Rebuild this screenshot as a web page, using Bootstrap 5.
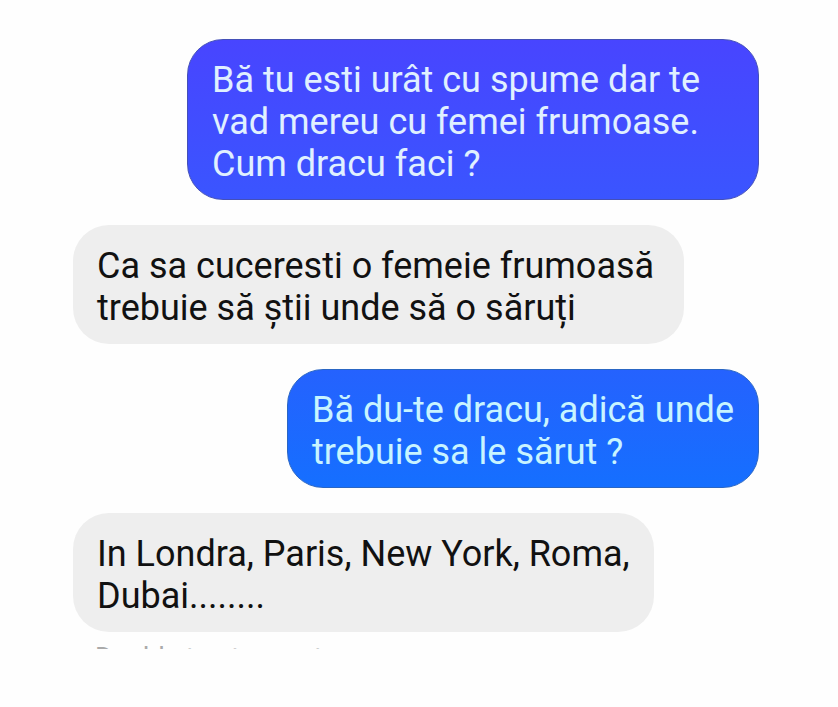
<!DOCTYPE html>
<html lang="ro">
<head>
<meta charset="utf-8">
<meta name="viewport" content="width=device-width, initial-scale=1">
<title>Chat</title>
<link href="https://cdn.jsdelivr.net/npm/bootstrap@5.3.0/dist/css/bootstrap.min.css" rel="stylesheet">
<style>
body { background: #fefefe; font-family: Roboto, "Liberation Sans", sans-serif; }
.chat { padding: 39px 79px 0 73px; gap: 25px; }
.bubble { max-width: 611px; padding: 20px 24px 15px; border-radius: 36px; font-size: 36px; line-height: 42px; }
.bubble-in { background: #eee; color: #111; }
.bubble-out { max-width: 572px; color: #e0f0ff; border: 1px solid #4450b8; padding: 19px 24px 14px; }
.tone-violet { background: linear-gradient(#4845ff, #3a55ff); }
.tone-blue { background: linear-gradient(#2562fe, #156fff); border-color: #2a66c4; color: #c8f4ff; }
.hint { height: 5px; margin: 12px 0 0 95px; font-size: 27px; line-height: 28px; color: #aaa; }
</style>
</head>
<body>
<main>
  <div class="chat d-flex flex-column">
    <p class="bubble bubble-out tone-violet align-self-end mb-0">Bă tu esti urât cu spume dar te vad mereu cu femei frumoase. Cum dracu faci ?</p>
    <p class="bubble bubble-in align-self-start mb-0">Ca sa cuceresti o femeie frumoasă trebuie să știi unde să o săruți</p>
    <p class="bubble bubble-out tone-blue align-self-end mb-0">Bă du-te dracu, adică unde<br>trebuie sa le sărut ?</p>
    <p class="bubble bubble-in align-self-start mb-0">In Londra, Paris, New York, Roma,<br>Dubai........</p>
  </div>
  <div class="hint overflow-hidden text-nowrap">Double tap to react</div>
</main>
<script src="https://cdn.jsdelivr.net/npm/bootstrap@5.3.0/dist/js/bootstrap.bundle.min.js"></script>
</body>
</html>
